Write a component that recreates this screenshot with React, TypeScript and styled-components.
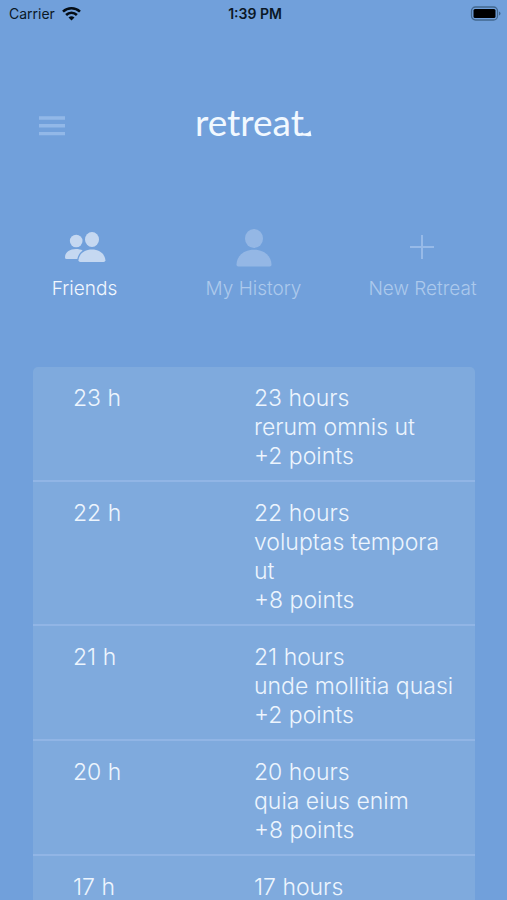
import React from "react";
import styled, { createGlobalStyle } from "styled-components";

const GlobalStyle = createGlobalStyle`
  *, *::before, *::after { box-sizing: border-box; }
  body {
    margin: 0;
    background: #71a0db;
    font-family: Inter, "Liberation Sans", sans-serif;
  }
`;

const Screen = styled.div`
  display: flex;
  flex-direction: column;
  height: 100vh;
  background: #71a0db;
  color: #edf5fd;
`;

const StatusBar = styled.div`
  display: grid;
  grid-template-columns: 1fr auto 1fr;
  align-items: center;
  height: 28px;
  padding: 0 6px 0 9px;
  color: #0b1826;
  font-size: 14px;
  line-height: 20px;
  flex: none;
`;

const Carrier = styled.span`
  display: flex;
  align-items: center;
  gap: 7px;
`;

const Clock = styled.time`
  font-weight: 600;
`;

const BatteryIcon = styled.svg`
  display: block;
  justify-self: end;
`;

const Header = styled.header`
  display: grid;
  grid-template-columns: 1fr auto 1fr;
  align-items: center;
  height: 60px;
  margin-top: 66px;
  padding: 0 38px;
  flex: none;
`;

const MenuButton = styled.button`
  justify-self: start;
  display: block;
  padding: 4px 0 0;
  border: 0;
  background: none;
  cursor: pointer;

  svg { display: block; }
`;

const Logo = styled.h1`
  display: flex;
  align-items: center;
  margin: 0;
  padding-bottom: 4px;
  color: #f1f8ff;
  font-family: Lato, "Open Sans", sans-serif;
  font-size: 37px;
  font-weight: 400;
  line-height: 44px;

  svg { display: block; margin-left: -3px; }
`;

const Tabs = styled.nav`
  display: grid;
  grid-template-columns: repeat(3, 1fr);
  margin-top: 75px;
  flex: none;
`;

const Tab = styled.button<{ $active?: boolean }>`
  display: flex;
  flex-direction: column;
  align-items: center;
  gap: 9px;
  padding: 0;
  border: 0;
  background: none;
  color: ${(p) => (p.$active ? "#f1f7fe" : "#acc9ec")};
  font: inherit;
  font-size: 19px;
  font-weight: 300;
  line-height: 26px;
  white-space: nowrap;
  cursor: pointer;

  svg { display: block; }
`;

const ListArea = styled.main`
  flex: 1;
  min-height: 0;
  margin-top: 65px;
  padding: 0 32px 0 33px;
  overflow-y: auto;
  scrollbar-width: none;
`;

const RetreatTable = styled.table`
  width: 100%;
  table-layout: fixed;
  border-spacing: 0;
  border-radius: 5px;
  background: #7faadd;
  font-size: 23px;
  font-weight: 300;
  line-height: 29px;
`;

const RetreatRow = styled.tr`
  &:not(:last-child) > * { border-bottom: 2px solid #91b5e5; }
`;

const Duration = styled.th`
  padding: 17px 20px 9px 40px;
  font-weight: inherit;
  text-align: left;
  vertical-align: top;
`;

const Details = styled.td`
  padding: 17px 16px 9px 0;
  vertical-align: top;
`;

const Line = styled.div``;

const retreats = [
  { hours: 23, name: "rerum omnis ut", points: 2 },
  { hours: 22, name: "voluptas tempora ut", points: 8 },
  { hours: 21, name: "unde mollitia quasi", points: 2 },
  { hours: 20, name: "quia eius enim", points: 8 },
  { hours: 17 },
];

const WifiIcon = () => (
  <svg width="19" height="14" viewBox="0 0 19 14" fill="none" stroke="#050d15" strokeWidth="2.6" aria-hidden="true">
    <path d="M1 4.6C5.8 .2 13.2 .2 18 4.6" />
    <path d="M4.1 8C7.2 5 11.8 5 14.9 8" />
    <path d="M6.5 10.4Q9.5 8 12.5 10.4L9.5 13.6Z" fill="#050d15" stroke="none" />
  </svg>
);

const FriendsIcon = () => (
  <svg width="42" height="38" viewBox="0 0 42 38" fill="#c5d8f1" aria-hidden="true">
    <circle cx="12.2" cy="12" r="6.3" />
    <path d="M1 28.4C1 23.5 5.2 19.9 11.8 19.9C14.7 19.9 17 20.4 18.6 21.4C15.8 23.6 13.8 26.6 13.3 30H2.6Q1 30 1 28.4Z" />
    <ellipse cx="28" cy="10.5" rx="7" ry="7.5" />
    <path d="M14.5 31.3C14.8 25.1 20.3 20.6 28 20.6C35.6 20.6 41 25.1 41.4 31.3Q41.4 33 39.6 33H16.3Q14.5 33 14.5 31.3Z" />
  </svg>
);

const PersonIcon = () => (
  <svg width="38" height="38" viewBox="0 0 38 38" fill="#94b7e5" aria-hidden="true">
    <ellipse cx="19" cy="9.5" rx="9" ry="9.5" />
    <path d="M1.5 35.7C1.7 27.2 8.4 20.8 19 20.8S36.3 27.2 36.5 35.7Q36.5 37.4 34.7 37.4H3.3Q1.5 37.4 1.5 35.7Z" />
  </svg>
);

const PlusIcon = () => (
  <svg width="26" height="38" viewBox="0 0 26 38" stroke="#97bae8" strokeWidth="2" aria-hidden="true">
    <path d="M12 6V30M0 18H24" />
  </svg>
);

export default function App() {
  return (
    <Screen>
      <GlobalStyle />
      <StatusBar>
        <Carrier>
          Carrier
          <WifiIcon />
        </Carrier>
        <Clock dateTime="13:39">1:39 PM</Clock>
        <BatteryIcon width="31" height="16" viewBox="0 1 31 16" role="img" aria-label="Battery full">
          <rect x="1.5" y="2" width="26" height="13" rx="4" fill="none" stroke="#42678e" strokeWidth="1.3" />
          <rect x="3.5" y="4" width="22" height="9" rx="1.5" fill="#000" />
          <path d="M29 6.5Q30.5 7 30.5 8.5T29 10.5Z" fill="#42678e" />
        </BatteryIcon>
      </StatusBar>

      <Header>
        <MenuButton type="button" aria-label="Menu">
          <svg width="28" height="20" viewBox="0 0 28 20" stroke="#92b8e8" strokeWidth="3.4" aria-hidden="true">
            <path d="M1 2H27M1 9.8H27M1 17.6H27" />
          </svg>
        </MenuButton>
        <Logo>
          retreat
          <svg width="11" height="44" viewBox="0 0 11 44" fill="#f1f8ff" aria-hidden="true">
            <path d="M0 33.4Q4 34 7 32.8L9.4 30.6L10.4 36L7.5 36.2Q4 35.8 0 35.6Z" />
          </svg>
        </Logo>
      </Header>

      <Tabs>
        <Tab type="button" $active>
          <FriendsIcon />
          Friends
        </Tab>
        <Tab type="button">
          <PersonIcon />
          My History
        </Tab>
        <Tab type="button">
          <PlusIcon />
          New Retreat
        </Tab>
      </Tabs>

      <ListArea>
        <RetreatTable>
          <tbody>
            {retreats.map((r) => (
              <RetreatRow key={r.hours}>
                <Duration scope="row">{r.hours} h</Duration>
                <Details>
                  <Line>{r.hours} hours</Line>
                  {r.name && <Line>{r.name}</Line>}
                  {r.points && <Line>+{r.points} points</Line>}
                </Details>
              </RetreatRow>
            ))}
          </tbody>
        </RetreatTable>
      </ListArea>
    </Screen>
  );
}
